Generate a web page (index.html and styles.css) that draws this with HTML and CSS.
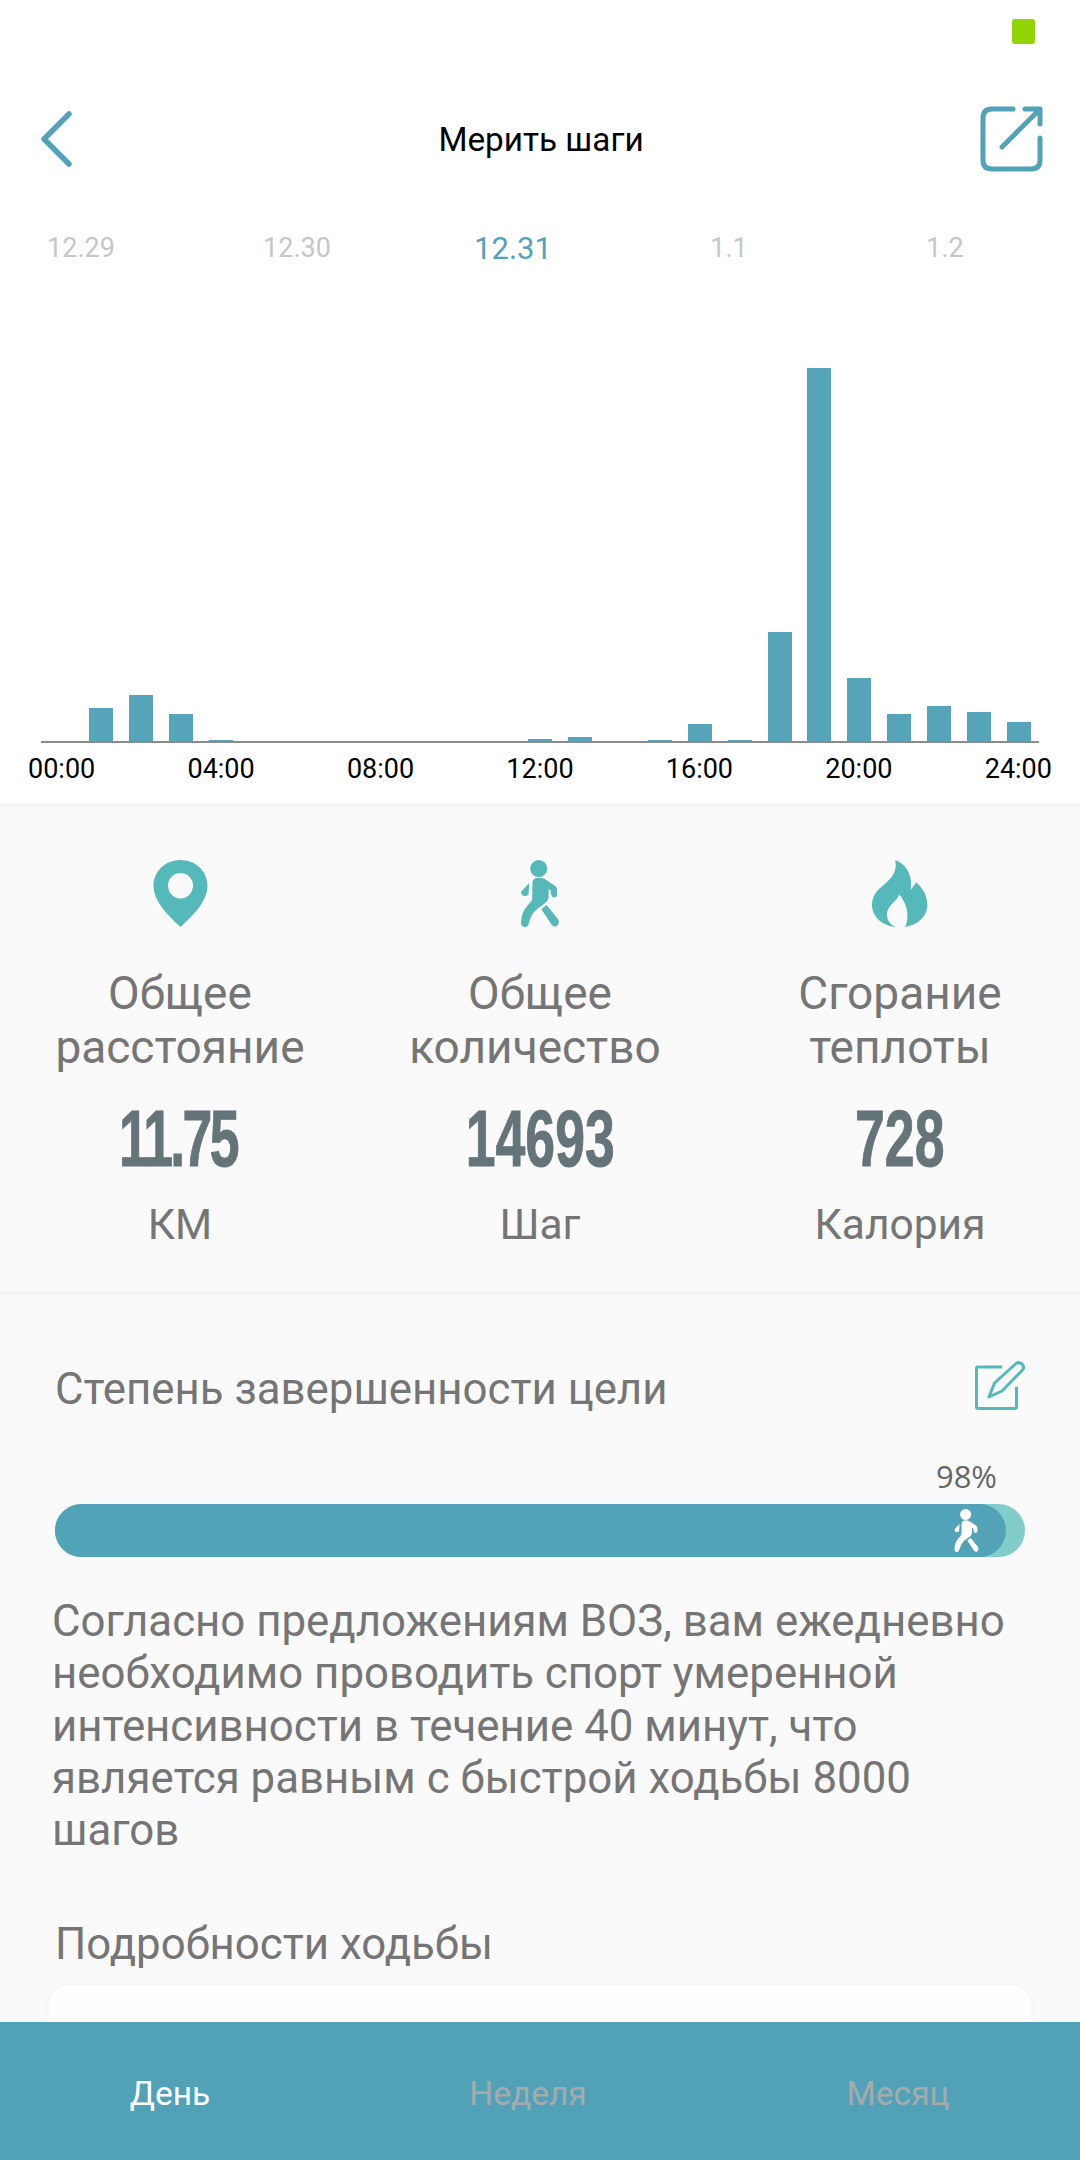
FILE: index.html
```html
<!DOCTYPE html>
<html lang="ru">
<head>
<meta charset="utf-8">
<title>Мерить шаги</title>
<link rel="stylesheet" href="styles.css">
</head>
<body>
<div class="app">
  <main class="scroll">
    <section class="top">
      <div class="status"><span class="status-dot"></span></div>
      <header class="nav">
        <svg class="nav-back" viewBox="0 0 32 56"><path d="M28 3 L3 28 L28 53" /></svg>
        <h1 class="nav-title">Мерить шаги</h1>
        <svg class="nav-share" viewBox="979 104 66 68"><path d="M1013 108 H992 Q983 108 983 117 V159 Q983 168 992 168 H1031 Q1040 168 1040 159 V137" /><path d="M1002 146 L1039 109 M1025 108 H1040 V123" /></svg>
      </header>
      <div class="dates">
        <span class="date">12.29</span>
        <span class="date">12.30</span>
        <span class="date date-active">12.31</span>
        <span class="date">1.1</span>
        <span class="date">1.2</span>
      </div>
      <div class="chart">
        <div class="bars">
          <i class="slot"></i>
          <i class="slot"><b class="bar" style="height:33px"></b></i>
          <i class="slot"><b class="bar" style="height:46px"></b></i>
          <i class="slot"><b class="bar" style="height:27px"></b></i>
          <i class="slot"><b class="bar" style="height:1px"></b></i>
          <i class="slot"></i><i class="slot"></i><i class="slot"></i><i class="slot"></i>
          <i class="slot"></i><i class="slot"></i><i class="slot"></i>
          <i class="slot"><b class="bar" style="height:2px"></b></i>
          <i class="slot"><b class="bar" style="height:4px"></b></i>
          <i class="slot"></i>
          <i class="slot"><b class="bar" style="height:1px"></b></i>
          <i class="slot"><b class="bar" style="height:17px"></b></i>
          <i class="slot"><b class="bar" style="height:1px"></b></i>
          <i class="slot"><b class="bar" style="height:109px"></b></i>
          <i class="slot"><b class="bar" style="height:373px"></b></i>
          <i class="slot"><b class="bar" style="height:63px"></b></i>
          <i class="slot"><b class="bar" style="height:27px"></b></i>
          <i class="slot"><b class="bar" style="height:35px"></b></i>
          <i class="slot"><b class="bar" style="height:29px"></b></i>
          <i class="slot"><b class="bar" style="height:19px"></b></i>
        </div>
        <div class="hours">
          <span>00:00</span><span>04:00</span><span>08:00</span><span>12:00</span><span>16:00</span><span>20:00</span><span>24:00</span>
        </div>
      </div>
    </section>

    <section class="stats">
      <div class="stat">
        <svg class="stat-icon" viewBox="0 0 55 67"><path fill-rule="evenodd" d="M27.5 0 C43 0 54.5 11.5 54.5 26 C54.5 40 42 54 27.500 67 C13 54 0.500 40 0.500 26 C0.500 11.500 12 0 27.500 0 Z M27.500 13 C20.500 13 15 18.500 15 25.500 C15 32.500 20.500 38.500 27.500 38.500 C34.500 38.500 40 32.500 40 25.500 C40 18.500 34.500 13 27.500 13 Z"/></svg>
        <p class="stat-label">Общее<br>расстояние</p>
        <div class="stat-value"><span class="tight">11.75</span></div>
        <p class="stat-unit">КМ</p>
      </div>
      <div class="stat">
        <svg class="stat-icon" viewBox="0 0 116 204"><use href="#walker"/></svg>
        <p class="stat-label">Общее<br><span class="nudge">количество</span></p>
        <div class="stat-value"><span>14693</span></div>
        <p class="stat-unit">Шаг</p>
      </div>
      <div class="stat">
        <svg class="stat-icon" viewBox="95 60 167 202"><path d="M165 60 C195 72 218 100 212 150 C218 142 224 134 228 128 C250 145 262 172 262 195 C262 230 235 255 195 262 C206 240 207 200 177 163 C172 185 140 195 140 225 C140 240 150 255 165 262 C125 258 95 230 95 195 C95 170 110 150 130 135 C155 115 172 95 165 60 Z"/></svg>
        <p class="stat-label">Сгорание<br>теплоты</p>
        <div class="stat-value"><span>728</span></div>
        <p class="stat-unit">Калория</p>
      </div>
    </section>

    <section class="goal">
      <div class="goal-head">
        <h2 class="goal-title">Степень завершенности цели</h2>
        <svg class="goal-edit" viewBox="0 0 50 50"><path d="M27 7 H3 Q1.500 7 1.500 8.500 V47 Q1.500 48.500 3 48.500 H40 Q41.500 48.500 41.500 47 V27" /><path d="M14 37 L19.500 23 L41 3.500 Q44 1.500 47 4 Q50 7 47.500 10 L27 31 Z" /></svg>
      </div>
      <div class="goal-pct">98%</div>
      <div class="progress">
        <div class="progress-fill" style="width:951px">
          <svg class="progress-walker" viewBox="0 0 116 204"><use href="#walker"/></svg>
        </div>
      </div>
      <p class="goal-text">Согласно предложениям ВОЗ, вам ежедневно необходимо проводить спорт умеренной интенсивности в течение 40 минут, что является равным с быстрой ходьбы 8000 шагов</p>
      <h2 class="detail-title">Подробности ходьбы</h2>
      <div class="detail-card"></div>
    </section>
  </main>

  <nav class="tabs">
    <span class="tab tab-active">День</span>
    <span class="tab">Неделя</span>
    <span class="tab">Месяц</span>
  </nav>
</div>

<svg class="defs" width="0" height="0">
  <symbol id="walker" viewBox="0 0 116 204">
    <circle cx="54" cy="26" r="26"/>
    <path d="M35 68 Q36 56 50 54 Q62 53 72 58 L100 76 Q110 82 110 92 L110 106 Q109 114 101 114 Q94 114 92 106 L90 92 L84 88 L84 116 Q82 126 70 134 L48 150 Q30 166 24 192 Q22 204 12 204 Q0 204 0 190 Q1 164 14 146 L34 122 Z"/>
    <path d="M25 70 L0 97 Q0 108 10 110 Q20 110 23 104 Z"/>
    <path d="M78 137 L114 182 Q118 192 110 200 Q102 206 94 198 L62 150 Z"/>
  </symbol>
</svg>
</body>
</html>
```
FILE: styles.css
```css
* { box-sizing: border-box; margin: 0; padding: 0; }
html, body { width: 1080px; height: 2160px; overflow: hidden; }
body { font-family: Roboto, "Noto Sans", sans-serif; background: #fafafb; color: #757575; }
.defs { display: block; height: 0; }
.app { display: flex; flex-direction: column; width: 1080px; height: 2160px; }
.scroll { flex: 1; min-height: 0; overflow: hidden; }

.top { height: 804px; background: #fff; box-shadow: 0 1px 6px rgba(0,0,0,.07); position: relative; }
.status { display: flex; justify-content: flex-end; height: 78px; padding: 19px 45px 0 0; }
.status-dot { width: 23px; height: 25px; background: #90d400; border-radius: 3px; }
.nav { display: grid; grid-template-columns: 1fr auto 1fr; align-items: center; height: 122px; padding: 0 37px 0 41px; }
.nav svg { fill: none; stroke: #53a3b8; stroke-linecap: round; stroke-linejoin: round; stroke-width: 5; }
.nav .nav-back { width: 32px; height: 56px; stroke-width: 5.500; }
.nav-share { width: 66px; height: 68px; justify-self: end; margin-right: -2px; }
.nav-title { font-size: 33.300px; font-weight: 400; color: #000; margin-left: -2px; }
.dates { display: flex; margin-left: -27px; height: 96px; align-items: center; }
.date { width: 216px; text-align: center; font-size: 27px; color: #c6c6c6; }
.date-active { font-size: 31px; color: #53a3b8; }
.chart { padding: 0 41px; }
.bars { display: grid; grid-template-columns: repeat(25, 1fr); align-items: end; height: 447px; border-bottom: 2px solid #8c8c8c; }
.slot { display: flex; justify-content: center; align-items: flex-end; }
.bar { display: block; width: 24px; background: #55a4b9; }
.hours { display: flex; justify-content: space-between; margin: 0 -13px; padding-top: 10px; font-size: 27px; line-height: 32px; color: #000; }

.stats { display: grid; grid-template-columns: repeat(3, 360px); height: 490px; padding-top: 56px; border-bottom: 2px solid #f0f0f0; }
.stat { display: flex; flex-direction: column; align-items: center; text-align: center; }
.stat-icon { height: 67px; fill: #56b9b9; display: block; }
.stat-label { font-size: 46px; line-height: 54px; margin-top: 39px; }
.nudge { padding-right: 10px; }
.stat-value { height: 80px; margin-top: 25px; font-family: "Liberation Sans Narrow", "Liberation Sans", sans-serif; font-weight: 700; font-size: 80px; line-height: 80px; color: #647479; }
.stat-value span { display: inline-block; transform: scaleX(.67); -webkit-text-stroke: 1px #647479; }
.stat-value .tight { letter-spacing: -4px; margin-left: -5px; }
.stat-unit { font-size: 42.500px; line-height: 50px; margin-top: 21px; }

.goal { padding: 0 49px; position: relative; }
.goal-head { display: flex; align-items: center; justify-content: space-between; height: 50px; margin-top: 66px; padding: 0 6px; }
.goal-title { font-size: 43.800px; font-weight: 400; margin-top: 8px; }
.goal-edit { width: 50px; height: 50px; fill: none; stroke: #56b9b9; stroke-width: 3; stroke-linejoin: round; }
.goal-pct { margin-top: 46px; text-align: right; padding-right: 34px; font-family: "Open Sans", sans-serif; font-size: 31px; line-height: 40px; color: #666; }
.progress { margin: 8px 6px 0; height: 53px; border-radius: 27px; background: #80cdc9; }
.progress-fill { height: 53px; border-radius: 27px; background: #53a3b8; display: flex; justify-content: flex-end; align-items: center; padding-right: 26px; }
.progress-walker { height: 43px; width: 27px; fill: #fff; }
.goal-text { margin-top: 38px; padding-left: 3px; width: 975px; font-size: 43.800px; line-height: 52.300px; }
.detail-title { margin-top: 62px; padding-left: 6px; font-size: 43.800px; font-weight: 400; }
.detail-card { margin-top: 15px; height: 200px; background: #fffefd; border-radius: 20px; box-shadow: 0 0 8px rgba(0,0,0,.03); }

.tabs { display: grid; grid-template-columns: 340px 376px 364px; align-items: center; height: 138px; padding-top: 4px; flex: none; background: #52a2b7; position: relative; text-align: center; font-size: 33.500px; color: #a5abad; }
.tab-active { color: #fff; }
```
